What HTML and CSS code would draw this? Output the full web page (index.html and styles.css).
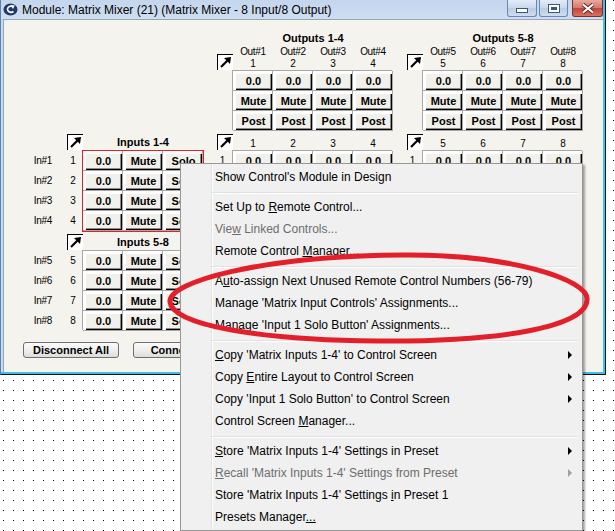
FILE: index.html
```html
<!DOCTYPE html>
<html lang="en">
<head>
  <meta charset="UTF-8" />
  <title>Module: Matrix Mixer (21)</title>
  <link rel="stylesheet" href="styles.css">
</head>
<body>
  <div class="window">
    <div class="titlebar">
      <svg class="app-icon" width="15" height="13" viewBox="0 0 15 13">
        <ellipse cx="7.5" cy="6.5" rx="7" ry="6" fill="#1f3a68"/>
        <path d="M10.5 8.5 A3.6 3 0 1 1 9.8 3.6" stroke="#fff" stroke-width="1.6" fill="none"/>
        <path d="M7.6 2 L11.8 2.6 L10 6 Z" fill="#fff"/>
      </svg>
      <span class="title">Module: Matrix Mixer (21) (Matrix Mixer - 8 Input/8 Output)</span>
      <div class="caption-btns">
        <span class="cap-btn">
          <svg width="12" height="5" viewBox="0 0 12 5"><rect x="0.5" y="0.5" width="11" height="4" fill="#fff" stroke="#3b5879"/></svg>
        </span>
        <span class="cap-btn max">
          <svg width="12" height="9" viewBox="0 0 12 9"><rect x="0.5" y="0.5" width="11" height="8" fill="#fff" stroke="#3b5879"/><rect x="3" y="3" width="6" height="3" fill="#3b5879"/></svg>
        </span>
        <span class="cap-btn close">
          <svg width="14" height="11" viewBox="0 0 14 11"><path d="M2 1.5 L12 9.5 M12 1.5 L2 9.5" stroke="#5a2a24" stroke-width="4"/><path d="M2 1.5 L12 9.5 M12 1.5 L2 9.5" stroke="#fff" stroke-width="2.2"/></svg>
        </span>
      </div>
    </div>

    <div class="client">
      <div class="mixer">
        <!-- output strips -->
        <div class="group-title c6 r1">Outputs 1-4</div>
        <div class="group-title c9 r1">Outputs 5-8</div>

        <div class="arrow c5 r2"><svg width="15" height="15" viewBox="0 0 15 15"><path d="M3 12 L9.5 5.5" stroke="#000" stroke-width="2.2"/><path d="M13 2 L6 3 L12 9 Z" fill="#000"/></svg></div>
        <div class="heads c6 r2">
          <span>Out#1<br>1</span><span>Out#2<br>2</span><span>Out#3<br>3</span><span>Out#4<br>4</span>
        </div>
        <div class="arrow c8 r2"><svg width="15" height="15" viewBox="0 0 15 15"><path d="M3 12 L9.5 5.5" stroke="#000" stroke-width="2.2"/><path d="M13 2 L6 3 L12 9 Z" fill="#000"/></svg></div>
        <div class="heads c9 r2">
          <span>Out#5<br>5</span><span>Out#6<br>6</span><span>Out#7<br>7</span><span>Out#8<br>8</span>
        </div>

        <div class="cells c6 r3" data-labels="0.0 Mute Post" data-cols="4" data-rows="3"></div>
        <div class="cells c9 r3" data-labels="0.0 Mute Post" data-cols="4" data-rows="3"></div>

        <!-- inputs 1-4 -->
        <div class="arrow c2 r4"><svg width="15" height="15" viewBox="0 0 15 15"><path d="M3 12 L9.5 5.5" stroke="#000" stroke-width="2.2"/><path d="M13 2 L6 3 L12 9 Z" fill="#000"/></svg></div>
        <div class="group-title low c3 r4">Inputs 1-4</div>
        <div class="arrow c5 r4"><svg width="15" height="15" viewBox="0 0 15 15"><path d="M3 12 L9.5 5.5" stroke="#000" stroke-width="2.2"/><path d="M13 2 L6 3 L12 9 Z" fill="#000"/></svg></div>
        <div class="nums c6 r4"><span>1</span><span>2</span><span>3</span><span>4</span></div>
        <div class="arrow c8 r4"><svg width="15" height="15" viewBox="0 0 15 15"><path d="M3 12 L9.5 5.5" stroke="#000" stroke-width="2.2"/><path d="M13 2 L6 3 L12 9 Z" fill="#000"/></svg></div>
        <div class="nums c9 r4"><span>5</span><span>6</span><span>7</span><span>8</span></div>

        <div class="in-labels c-lab r5">
          <span>In#1</span><span>1</span><span>In#2</span><span>2</span><span>In#3</span><span>3</span><span>In#4</span><span>4</span>
        </div>
        <div class="cells selected c3 r5" data-labels="0.0 Mute Solo" data-by="col" data-cols="3" data-rows="4"></div>
        <!-- only the first cross-point row shows above the context menu -->
        <div class="row-nums c5 r5"><span>1</span></div>
        <div class="cells c6 r5" data-labels="0.0" data-cols="4" data-rows="1"></div>
        <div class="row-nums c8 r5"><span>1</span></div>
        <div class="cells c9 r5" data-labels="0.0" data-cols="4" data-rows="1"></div>

        <!-- inputs 5-8 -->
        <div class="arrow c2 r6"><svg width="15" height="15" viewBox="0 0 15 15"><path d="M3 12 L9.5 5.5" stroke="#000" stroke-width="2.2"/><path d="M13 2 L6 3 L12 9 Z" fill="#000"/></svg></div>
        <div class="group-title low c3 r6">Inputs 5-8</div>

        <div class="in-labels c-lab r7">
          <span>In#5</span><span>5</span><span>In#6</span><span>6</span><span>In#7</span><span>7</span><span>In#8</span><span>8</span>
        </div>
        <div class="cells c3 r7" data-labels="0.0 Mute Solo" data-by="col" data-cols="3" data-rows="4"></div>
      </div>

      <div class="actions">
        <button>Disconnect All</button>
        <button>Connect All</button>
      </div>
    </div>
  </div>

  <div class="menu">
    <div class="item">Show Control's Module in Design</div>
    <div class="sep"></div>
    <div class="item">Set Up to <u>R</u>emote Control...</div>
    <div class="item disabled">Vie<u>w</u> Linked Controls...</div>
    <div class="item">Remote Control <u>M</u>anager...</div>
    <div class="sep"></div>
    <div class="item">A<u>u</u>to-assign Next Unused Remote Control Numbers (56-79)</div>
    <div class="item">Manage 'Matrix Input Controls' Assignments...</div>
    <div class="item">Manage 'Input 1 Solo Button' Assignments...</div>
    <div class="sep"></div>
    <div class="item sub"><span><u>C</u>opy 'Matrix Inputs 1-4' to Control Screen</span></div>
    <div class="item sub"><span>Copy <u>E</u>ntire Layout to Control Screen</span></div>
    <div class="item sub"><span>Copy 'Input 1 Solo Button' to Control Screen</span></div>
    <div class="item">Control Screen <u>M</u>anager...</div>
    <div class="sep"></div>
    <div class="item sub"><span><u>S</u>tore 'Matrix Inputs 1-4' Settings in Preset</span></div>
    <div class="item sub disabled"><span><u>R</u>ecall 'Matrix Inputs 1-4' Settings from Preset</span></div>
    <div class="item">Store 'Matrix Inputs 1-4' Settings <u>i</u>n Preset 1</div>
    <div class="item">Presets Manager<u>...</u></div>
  </div>

  <svg class="scribble" width="615" height="531" viewBox="0 0 615 531">
    <path d="M170 302 C168 282 260 256 403 255 C510 254 590 280 587 300 C586 327 500 342 377 341 C260 340 172 325 170 302 Z"
          fill="none" stroke="#e3202a" stroke-width="5"/>
  </svg>

  <script>
    // fill the button grids: one label per row, or per column when data-by="col"
    document.querySelectorAll(".cells").forEach(function (grid) {
      const labels = grid.dataset.labels.split(" ");
      const cols = parseInt(grid.dataset.cols);
      const rows = parseInt(grid.dataset.rows);
      for (let r = 0; r < rows; r++) {
        for (let c = 0; c < cols; c++) {
          const label = grid.dataset.by === "col" ? labels[c] : labels[r % labels.length];
          const cell = document.createElement("div");
          cell.className = "cell";
          cell.innerHTML = '<span class="btn">' + label + "</span>";
          grid.appendChild(cell);
        }
      }
    });
  </script>
</body>
</html>
```

FILE: styles.css
```css
body {
  margin: 0;
  width: 615px;
  height: 531px;
  overflow: hidden;
  position: relative;
  font-family: "Liberation Sans", Arial, sans-serif;
  color: #000;
  background-color: #fff;
  background-image:
    linear-gradient(90deg, #fff 9px, transparent 9px),
    linear-gradient(#fff 9px, #000 9px);
  background-size: 10px 10px;
  background-position: -6px 1px;
}

/* window frame */
.window {
  width: 606px;
  box-sizing: border-box;
  padding: 0 2px 2px 2px;
  background: linear-gradient(#c3d6ed, #cfdef1 19px, #c9daef 19px);
  border-left: 1px solid #5f80aa;
  border-right: 1px solid #111;
  border-bottom: 1px solid #111;
  box-shadow: inset -2px -2px 0 #3ec0ea;
}
.titlebar {
  height: 19px;
  display: flex;
  align-items: center;
}
.app-icon {
  margin-top: -1px;
}
.title {
  margin-left: 4px;
  font-size: 12px;
  white-space: nowrap;
}
.caption-btns {
  margin-left: auto;
  align-self: flex-start;
  display: flex;
}
.cap-btn {
  width: 30px;
  height: 17px;
  box-sizing: border-box;
  display: flex;
  align-items: center;
  justify-content: center;
  border: 1px solid #6a88b0;
  border-top: none;
  border-radius: 0 0 3px 3px;
  background: linear-gradient(#e3ecf7, #c8d8ec 50%, #b8cce6 51%, #cfdcee);
}
.cap-btn:first-child svg {
  margin-top: 5px;
}
.cap-btn.max {
  width: 29px;
  margin-left: 2px;
}
.cap-btn.close {
  width: 31px;
  margin-left: 4px;
  border-color: #7b322a;
  background: linear-gradient(#e9aa9d, #d5786a 50%, #c2443a 51%, #d9705f);
}

/* client area */
.client {
  background: #f5f3ed;
  border-top: 1px solid #8fa6c1;
  border-left: 1px solid #8fa6c1;
  padding: 11px 0 14px 19px;
}
.mixer {
  display: grid;
  grid-template-columns: 40px 20px 120px 14px 16px 160px 14px 16px 160px;
  grid-template-rows: 14px 26px 60px 20px 80px 20px 80px;
  font-size: 10px;
}
.c-lab { grid-column: 1 / 3; }
.c2 { grid-column: 2; }
.c3 { grid-column: 3; }
.c5 { grid-column: 5; }
.c6 { grid-column: 6; }
.c8 { grid-column: 8; }
.c9 { grid-column: 9; }
.r1 { grid-row: 1; }
.r2 { grid-row: 2; }
.r3 { grid-row: 3; }
.r4 { grid-row: 4; }
.r5 { grid-row: 5; }
.r6 { grid-row: 6; }
.r7 { grid-row: 7; }

.group-title {
  font-weight: bold;
  font-size: 11px;
  line-height: 14px;
  text-align: center;
}
.group-title.low {
  align-self: end;
  margin-bottom: 2px;
}
.arrow {
  width: 15px;
  height: 15px;
  justify-self: end;
  align-self: end;
  margin-bottom: 1px;
  background: #fff;
  border-top: 1px solid #000;
  border-left: 1px solid #000;
}
.arrow svg {
  display: block;
}
.heads, .nums {
  display: grid;
  grid-template-columns: repeat(4, 40px);
  align-self: end;
  padding-bottom: 1px;
  line-height: 12px;
  text-align: center;
  letter-spacing: -0.3px;
}
.in-labels {
  display: grid;
  grid-template-columns: 40px 20px;
  grid-auto-rows: 20px;
  line-height: 20px;
  text-align: center;
  letter-spacing: -0.3px;
}
.row-nums {
  display: grid;
  grid-auto-rows: 20px;
  line-height: 20px;
  text-align: center;
  padding-right: 5px;
}

/* button grids */
.cells {
  display: grid;
  grid-template-columns: repeat(auto-fill, 40px);
  grid-auto-rows: 20px;
  align-self: start;
  background: #fff;
  box-shadow: -1px -1px 0 #a8a8a8;
}
.cells.selected {
  outline: 1px solid #e52121;
}
.cell {
  display: flex;
  box-sizing: border-box;
  border-right: 1px solid #a8a8a8;
  border-bottom: 1px solid #a8a8a8;
  padding: 3px 0 0 3px;
}
.btn {
  flex: 1;
  background: #f2f0eb;
  border-right: 1px solid #000;
  border-bottom: 1px solid #000;
  box-shadow: inset -1px -1px 0 #8d8d8d;
  font-weight: bold;
  font-size: 11px;
  line-height: 15px;
  text-align: center;
}

.actions {
  display: flex;
  gap: 14px;
  margin-top: 11px;
}
.actions button {
  width: 96px;
  height: 16px;
  padding: 0;
  border: 1px solid #6f6f6f;
  border-radius: 3px;
  background: linear-gradient(#fbfbfb, #ececec 60%, #dcdcdc);
  font-family: "Liberation Sans", Arial, sans-serif;
  font-weight: bold;
  font-size: 11px;
  line-height: 14px;
  color: #000;
}

/* context menu */
.menu {
  position: absolute;
  left: 180px;
  top: 163px;
  width: 403px;
  box-sizing: border-box;
  padding: 2px;
  border: 1px solid #979797;
  background: linear-gradient(90deg, transparent 30px, #e2e3e3 30px, #e2e3e3 31px, #fff 31px, #fff 32px, transparent 32px) #f0f0f0;
  box-shadow: 2px 2px 2px rgba(0, 0, 0, 0.35);
  font-size: 12px;
}
.item {
  height: 22px;
  line-height: 22px;
  padding: 0 8px 0 32px;
  white-space: nowrap;
}
.item.sub {
  display: flex;
  align-items: center;
  justify-content: space-between;
}
.item.sub::after {
  content: "";
  border-left: 4px solid #000;
  border-top: 4px solid transparent;
  border-bottom: 4px solid transparent;
}
.item.disabled {
  color: #6d6d6d;
}
.item.sub.disabled::after {
  border-left-color: #a0a0a0;
}
.sep {
  border-top: 1px solid #e0e0e0;
  border-bottom: 1px solid #fff;
  margin: 4px 2px 2px 29px;
}

.scribble {
  position: absolute;
  left: 0;
  top: 0;
  pointer-events: none;
}
```
